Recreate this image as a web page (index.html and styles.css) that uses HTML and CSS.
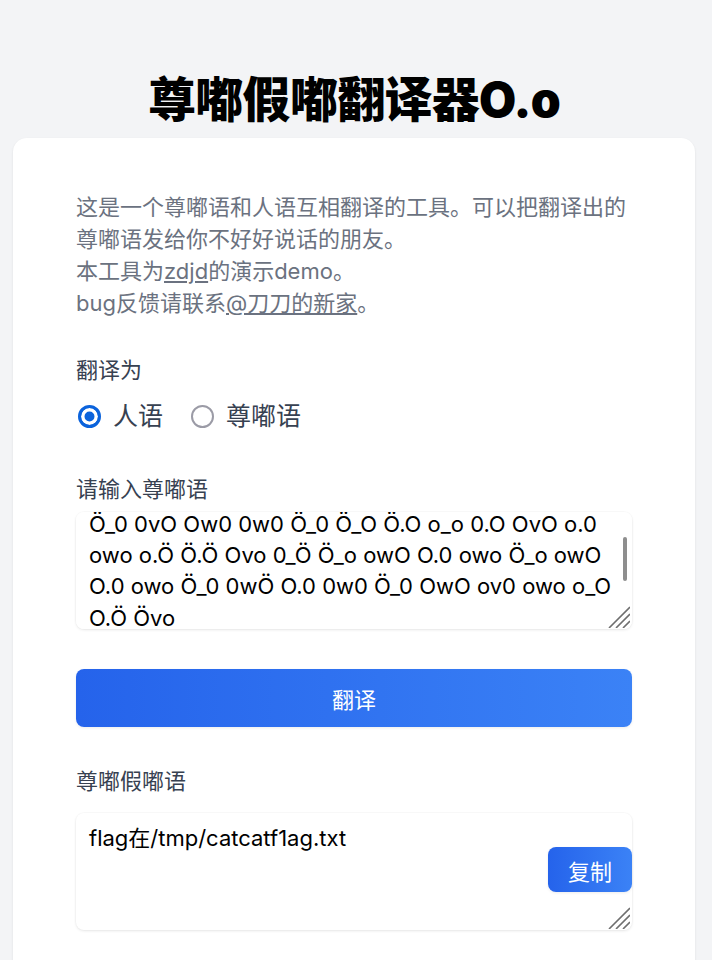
FILE: index.html
```html
<!DOCTYPE html>
<html lang="zh">
<head>
<meta charset="utf-8">
<title>尊嘟假嘟翻译器O.o</title>
<link rel="stylesheet" href="styles.css">
</head>
<body>
<h1 class="title">尊嘟假嘟翻译器O.o</h1>
<main class="card">
  <p class="intro">这是一个尊嘟语和人语互相翻译的工具。可以把翻译出的<br>尊嘟语发给你不好好说话的朋友。<br>本工具为<a href="#">zdjd</a>的演示demo。<br>bug反馈请联系<a href="#">@刀刀的新家</a>。</p>

  <div class="field-label mt-mode">翻译为</div>
  <div class="radios">
    <label class="radio"><input type="radio" name="mode" checked><span>人语</span></label>
    <label class="radio"><input type="radio" name="mode"><span>尊嘟语</span></label>
  </div>

  <div class="field-label mt-input">请输入尊嘟语</div>
  <div class="ta-wrap mt-box-input">
    <textarea id="src" class="box box-input">Ö_0 0vO Ow0 0w0 Ö_0 Ö_O Ö.O o_o 0.O OvO o.0
owo o.Ö Ö.Ö Ovo 0_Ö Ö_o owO O.0 owo Ö_o owO
O.0 owo Ö_0 0wÖ O.0 0w0 Ö_0 OwO ov0 owo o_O
O.Ö Övo</textarea>
    <span class="thumb"></span>
    <svg class="grip" width="22" height="22" viewBox="0 0 22 22"><path d="M1 22 L22 1 M8 22 L22 8 M15 22 L22 15" stroke="#6f6f6f" stroke-width="1.6" fill="none"/></svg>
  </div>

  <button class="btn btn-main" type="button">翻译</button>

  <div class="field-label mt-output">尊嘟假嘟语</div>
  <div class="ta-wrap mt-box-output">
    <textarea class="box box-output">flag在/tmp/catcatf1ag.txt</textarea>
    <button class="btn btn-copy" type="button">复制</button>
    <svg class="grip" width="22" height="22" viewBox="0 0 22 22"><path d="M1 22 L22 1 M8 22 L22 8 M15 22 L22 15" stroke="#6f6f6f" stroke-width="1.6" fill="none"/></svg>
  </div>
</main>
<script src="script.js"></script>
</body>
</html>
```

FILE: styles.css
```css
* { box-sizing: border-box; }
html, body { margin: 0; padding: 0; }
body {
  background: #f3f4f6;
  font-family: "Inter", "Noto Sans CJK SC", sans-serif;
  color: #111827;
  padding-right: 4px;
}
.title {
  margin: 0;
  padding-top: 76px;
  height: 138px;
  font-size: 48px;
  line-height: 48px;
  font-weight: 900;
  color: #000;
  text-align: center;
  letter-spacing: -0.7px;
}
.card {
  margin: 0 13px;
  background: #fff;
  border-radius: 14px;
  box-shadow: 0 1px 3px rgba(0,0,0,0.06), 0 1px 2px rgba(0,0,0,0.04);
  padding: 53px 63px 40px;
  min-height: 840px;
}
.intro {
  margin: 0;
  font-size: 22px;
  line-height: 32px;
  color: #6b7280;
}
.intro a { color: #6b7280; text-decoration: underline; }
.field-label {
  font-size: 22px;
  line-height: 32px;
  color: #374151;
}
.mt-mode { margin-top: 35px; }
.mt-input { margin-top: 41px; }
.mt-output { margin-top: 38px; }
.radios {
  display: flex;
  gap: 26px;
  margin-top: 14px;
}
.radio {
  display: flex;
  align-items: center;
  gap: 12px;
  font-size: 25px;
  line-height: 32px;
  color: #374151;
}
.radio input {
  appearance: none;
  -webkit-appearance: none;
  margin: 0 0 0 2px;
  width: 23px;
  height: 23px;
  border-radius: 50%;
  border: 2.5px solid #9b9ba6;
  background: #fff;
}
.radio input:checked {
  border: 3px solid #0b63dc;
  background: #0b63dc;
  box-shadow: inset 0 0 0 3.5px #fff;
}
.ta-wrap { position: relative; }
.mt-box-input { margin-top: 7px; }
.mt-box-output { margin-top: 16px; }
.box {
  display: block;
  width: 100%;
  border: none;
  border-radius: 8px;
  background: #fff;
  box-shadow: 0 1px 3px rgba(0,0,0,0.09), 0 0 0 1px rgba(0,0,0,0.015);
  font-family: "Inter", "Noto Sans CJK SC", sans-serif;
  font-size: 22px;
  line-height: 32px;
  color: #000;
  padding: 12px 13px;
  outline: none;
  resize: none;
}
.box-input { height: 117px; line-height: 31.2px; }
.box-output { height: 117px; padding-top: 9px; }
.thumb {
  position: absolute;
  right: 5px;
  top: 25px;
  width: 4px;
  height: 44px;
  border-radius: 2px;
  background: #8e8e8e;
}
.grip {
  position: absolute;
  right: 2px;
  bottom: 1px;
  pointer-events: none;
}
.btn {
  border: none;
  color: #fff;
  font-family: "Inter", "Noto Sans CJK SC", sans-serif;
  background: linear-gradient(90deg, #2563eb, #3b82f6);
  border-radius: 8px;
  box-shadow: 0 1px 3px rgba(0,0,0,0.08);
}
.btn-main {
  display: block;
  width: 100%;
  height: 58px;
  margin-top: 40px;
  font-size: 22px;
}
.btn-copy {
  position: absolute;
  right: 0;
  top: 34px;
  width: 84px;
  height: 45px;
  font-size: 22px;
}
```

FILE: script.js
```js
document.getElementById('src').scrollTop = 15;
```
